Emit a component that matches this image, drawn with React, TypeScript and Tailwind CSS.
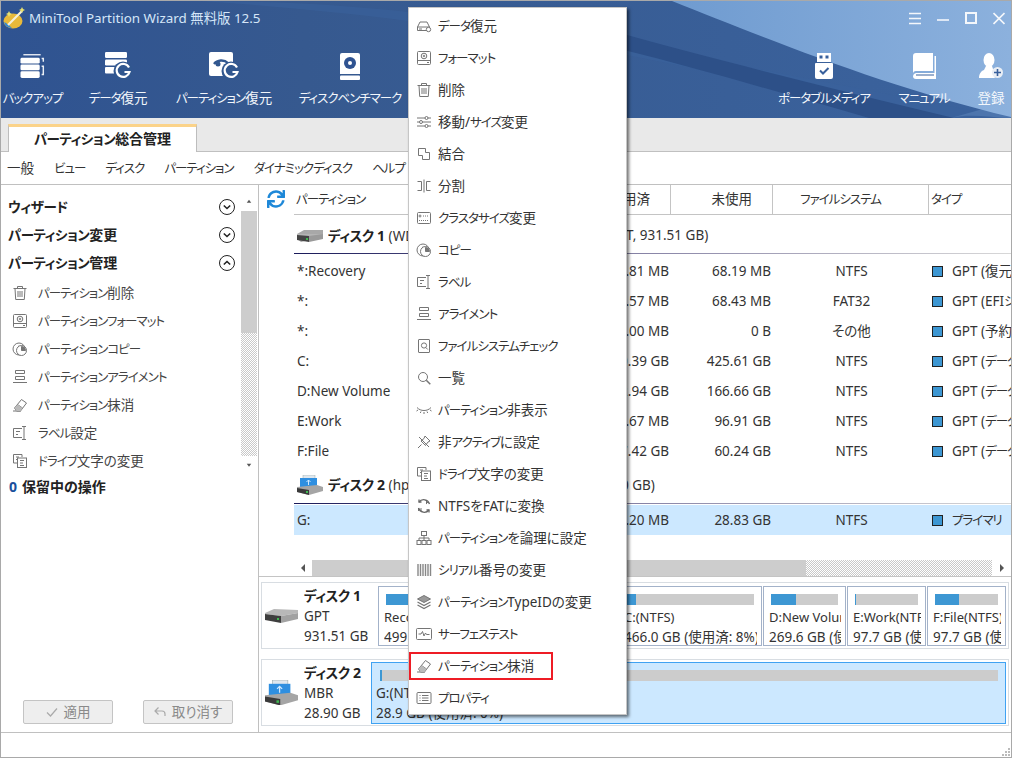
import React from "react";
import { FaSync } from "react-icons/fa";

const G = "#757575";
type P = { children?: React.ReactNode; s?: number; c?: string };
const S = ({ children, s = 16, c = G }: P) => (
  <svg width={s} height={s} viewBox="0 0 16 16" fill="none" stroke={c} strokeWidth="1" className="shrink-0">{children}</svg>
);

const T = ({ t, b }: { t: string; b?: boolean }) => (
  <>
    {t.split(/([\u30A0-\u30FF]+)/).map((p, i) =>
      i % 2 === 1 ? (
        <span key={i} className={b ? "text-[13.5px] tracking-[-0.5px]" : "text-[12.5px] tracking-[-1px]"}>{p}</span>
      ) : (
        <span key={i}>{p}</span>
      )
    )}
  </>
);

const IDrive = () => <S><path d="M1.500 9 4 4h7l2.500 5M1.500 9h12v3.500h-12z" /><circle cx="12.500" cy="11.500" r="2.200" fill="#fff" /><path d="M3 11h3" /></S>;
const IFormat = () => <S><rect x="1.500" y="1.500" width="13" height="13" rx="1" /><path d="M1.500 10.500h13M11 12.500h2" /><circle cx="8" cy="6" r="2.800" /><circle cx="8" cy="6" r=".8" /></S>;
const ITrash = () => <S><path d="M1.500 3.500h13M5.500 3.500v-2h5v2M3 3.500l.7 11h8.600l.7-11M6 6v6M8 6v6M10 6v6" /></S>;
const ISliders = () => <S><path d="M1 4h14M1 8h14M1 12h14" /><circle cx="10.500" cy="4" r="1.500" fill="#fff" /><circle cx="5" cy="8" r="1.500" fill="#fff" /><circle cx="10.500" cy="12" r="1.500" fill="#fff" /></S>;
const IMerge = () => <S><path d="M2.500 2.500h7v4h4v7h-7v-4h-4z" /></S>;
const ISplit = () => <S><path d="M1.500 3.500h4v9h-4M14.500 3.500h-4v9h4M8 1.500v13" /></S>;
const ICluster = () => <S><rect x="1.500" y="2.500" width="13" height="11" rx="1" /><circle cx="4" cy="6" r="1" /><path d="M7 6h6M3 10.500h10" strokeDasharray="1 1" /></S>;
const ICopy = () => <S><circle cx="7" cy="8" r="6" /><path d="M7 4.500V8h3.500" /><circle cx="9.500" cy="9.500" r="5" fill="#fff" /><path d="M9.500 9.500V5.500a4 4 0 0 1 4 4z" fill={G} /></S>;
const ILabel = () => <S><path d="M10 3.500H1.500v9H10M4 6.500h4M4 9.500h2M10 1.500h4M10 14.500h4M12 1.500v13" /></S>;
const IAlign = () => <S><path d="M3.500 1.500h9v3h-9zM3.500 7.500h9v3h-9zM1 13.500h14" /></S>;
const ICheck = () => <S><rect x="2.500" y="1.500" width="11" height="13" rx=".5" /><circle cx="8" cy="7.500" r="2.600" /><path d="m9.800 9.500 2 2" /></S>;
const ISearch = () => <S><circle cx="7" cy="7" r="4.500" /><path d="m10.300 10.300 4 4" strokeWidth="1.500" /></S>;
const IEye = () => <S><path d="M1 5.500c3.500 4 10.500 4 14 0M2 8l-1.500 1M5 9.500l-.7 1.500M8 10v2M11 9.500l.7 1.500M14 8l1.500 1" /></S>;
const IPin = () => <S><path d="m9 2 5 5-2 1-2.500 3.500L5 7l3-2.500zM5.500 10.500 2 14M3 3l10 10" /></S>;
const ILetter = () => <S><path d="M10 4V1.500H1.500V10H5" /><rect x="5.500" y="5" width="9" height="9.500" /><path d="M8 7.500h4M8 10h3M8 12.500h4M4 4h3M4 6.500h1" /></S>;
const IConv = () => <S c="#666"><path d="M13.500 6A6 6 0 0 0 3 4M2.500 10A6 6 0 0 0 13 12" strokeWidth="1.300" /><path d="M3 1.500V4h2.500M13 14.500V12h-2.500" strokeWidth="1.300" /><path d="M10.500 3V6h.1M10.500 4.500h2M2.500 13v-3l2.500 3v-3" strokeWidth=".9" /></S>;
const IOrg = () => <S><rect x="5.500" y="1.500" width="5" height="4" /><rect x="1" y="10.500" width="4" height="4" /><rect x="6" y="10.500" width="4" height="4" /><rect x="11" y="10.500" width="4" height="4" /><path d="M8 5.500v5M3 10.500V8h10v2.500" /></S>;
const IBar = () => <S><path d="M2 2v12M4.500 2v12M7 2v12M9.500 2v12M12 2v12M14.500 2v12" strokeWidth="1.400" stroke="#888" /></S>;
const ILayers = () => <S><path d="m8 1.500 6.500 3.500L8 8.500 1.500 5z" fill="#999" /><path d="m1.500 8 6.500 3.500L14.500 8M1.500 11l6.500 3.500 6.500-3.500" strokeWidth="1.200" /></S>;
const IPulse = () => <S><rect x=".5" y="2.500" width="15" height="11" rx="1" /><path d="M2.500 8H5l1.500-2.500L8 10l1.500-3 1 1.500h3" /></S>;
const IEraser = () => <S><path d="M1 14h8M2.500 11 9.500 2.500l5 3.500-6 8H4.500zM5.500 7.500l5 3.500" /><path d="M5.500 7.500l5 3.500-2 3H4.500L2.500 11z" fill="#bbb" stroke="none" /></S>;
const IProps = () => <S><rect x="1" y="2.500" width="14" height="11" rx="1" /><path d="M3.500 5.500h1M6 5.500h6.500M3.500 8h1M6 8h6.500M3.500 10.500h1M6 10.500h6.500" /></S>;

const menu: [React.FC, string][] = [
  [IDrive, "データ復元"], [IFormat, "フォーマット"], [ITrash, "削除"], [ISliders, "移動/サイズ変更"],
  [IMerge, "結合"], [ISplit, "分割"], [ICluster, "クラスタサイズ変更"], [ICopy, "コピー"],
  [ILabel, "ラベル"], [IAlign, "アライメント"], [ICheck, "ファイルシステムチェック"], [ISearch, "一覧"],
  [IEye, "パーティション非表示"], [IPin, "非アクティブに設定"], [ILetter, "ドライブ文字の変更"], [IConv, "NTFSをFATに変換"],
  [IOrg, "パーティションを論理に設定"], [IBar, "シリアル番号の変更"], [ILayers, "パーティションTypeIDの変更"], [IPulse, "サーフェステスト"],
  [IEraser, "パーティション抹消"], [IProps, "プロパティ"],
];

const side: [React.FC, string][] = [
  [ITrash, "パーティション削除"], [IFormat, "パーティションフォーマット"], [ICopy, "パーティションコピー"],
  [IAlign, "パーティションアライメント"], [IEraser, "パーティション抹消"], [ILabel, "ラベル設定"], [ILetter, "ドライブ文字の変更"],
];

const rows = [
  ["*:Recovery", "499.00 MB", "430.81 MB", "68.19 MB", "NTFS", "GPT (復元パーティション)"],
  ["*:", "100.00 MB", "31.57 MB", "68.43 MB", "FAT32", "GPT (EFIシステム)"],
  ["*:", "16.00 MB", "16.00 MB", "0 B", "その他", "GPT (予約パーティション)"],
  ["C:", "466.00 GB", "40.39 GB", "425.61 GB", "NTFS", "GPT (データ)"],
  ["D:New Volume", "269.60 GB", "102.94 GB", "166.66 GB", "NTFS", "GPT (データ)"],
  ["E:Work", "97.70 GB", "807.67 MB", "96.91 GB", "NTFS", "GPT (データ)"],
  ["F:File", "97.70 GB", "37.42 GB", "60.24 GB", "NTFS", "GPT (データ)"],
];

const tableCols = "grid grid-cols-[166px_120px_91px_102px_156px_1fr]";

const Row = ({ r, sel }: { r: string[]; sel?: boolean }) => (
  <div className={`${tableCols} h-[30px] items-center whitespace-nowrap text-[13.5px] text-[#333] ${sel ? "bg-[#cce8ff]" : ""}`}>
    <div className="pl-[3px]">{r[0]}</div>
    <div className="pr-[20px] text-right">{r[1]}</div>
    <div className="pr-[2px] text-right">{r[2]}</div>
    <div className="pr-[2px] text-right">{r[3]}</div>
    <div className="pl-[1px] text-center">{r[4]}</div>
    <div className="flex items-center overflow-hidden pl-[3px]">
      <span className="mr-[9px] h-[11px] w-[11px] shrink-0 border border-[#222] bg-[#3d97d3]" />
      <span><T t={r[5]} /></span>
    </div>
  </div>
);

const HeadCell = ({ t, cls }: { t: string; cls: string }) => (
  <div className={`flex h-full items-center border-r border-[#c4c4c4] ${cls}`}><span><T t={t} /></span></div>
);

const Chevron = ({ up }: { up?: boolean }) => (
  <svg width="16" height="16" viewBox="0 0 16 16" fill="none" stroke="#222" className="shrink-0">
    <circle cx="8" cy="8" r="7.500" strokeWidth="1" />
    <path d={up ? "m4.800 9.500 3.200-3 3.200 3" : "m4.800 6.500 3.200 3 3.200-3"} strokeWidth="1.600" />
  </svg>
);

const Arrow = ({ d }: { d: "u" | "d" | "l" | "r" }) => {
  const pts = { u: "1,5 4,1 7,5", d: "1,1 4,5 7,1", l: "6,0 6,8 2,4", r: "2,0 2,8 6,4" }[d];
  return <svg width="8" height="8" viewBox="0 0 8 8" fill="#555" className={d === "u" || d === "d" ? "h-[6px]" : ""}><polygon points={pts} /></svg>;
};

const HddSmall = () => (
  <svg width="26" height="12" viewBox="0 0 26 12">
    <polygon points="0,4 7,0 26,0 26,4 25,7 4,12 0,9" fill="#a8a8a8" />
    <polygon points="0,4 25,4 26,7 0,9" fill="#b4b4b4" />
    <polygon points="0,5 12,6 12,12 0,10" fill="#444" />
    <polygon points="12,6 26,4 26,9 12,12" fill="#9a9a9a" />
    <rect x="9" y="8" width="2" height="2" fill="#3fb950" />
  </svg>
);

const UsbSmall = ({ w = 26 }: { w?: number }) => (
  <svg width={w} height={(w * 20) / 26} viewBox="0 0 26 20">
    <rect x="6" y="0" width="12" height="4" fill="#dfe7ee" stroke="#9aa" strokeWidth=".5" />
    <rect x="3" y="3" width="17" height="10" fill="#2f8fe0" />
    <path d="M11.500 5v5M9.500 7l2-2 2 2" stroke="#cfe8ff" fill="none" />
    <polygon points="0,12 20,10 26,12 26,16 12,20 0,17" fill="#a5a5a5" />
    <polygon points="0,13 12,15 12,20 0,17" fill="#3a3a3a" />
    <rect x="9" y="16" width="2" height="2" fill="#3fb950" />
  </svg>
);

const HddBig = () => (
  <svg width="33" height="14" viewBox="0 0 33 14">
    <polygon points="0,4 9,0 33,1 33,4 16,7 0,5" fill="#b8b8b8" />
    <polygon points="0,5 16,7 16,14 0,11" fill="#3e3e3e" />
    <polygon points="16,7 33,4 33,10 16,14" fill="#a2a2a2" />
    <rect x="12" y="9" width="2" height="2" fill="#3fb950" />
  </svg>
);

const Dither = "[background:repeating-conic-gradient(#c9c9c9_0_25%,#ffffff_0_50%)_0_0/2px_2px]";

const Tool = ({ w, t, children }: { w: string; t: string; children: React.ReactNode }) => (
  <div className={`flex shrink-0 flex-col items-center ${w}`}>
    <div className="flex h-[28px] items-center">{children}</div>
    <div className="mt-[9px] whitespace-nowrap text-[13.5px] leading-[18px] text-[#f2f6fb]"><T t={t} /></div>
  </div>
);

const GArrow = ({ cx = 21, cy = 22 }: { cx?: number; cy?: number }) => (
  <g>
    <circle cx={cx} cy={cy} r="9.500" fill="#31578f" />
    <path d={`M${cx + 6} ${cy - 3.5}A6.500 6.500 0 1 0 ${cx + 6.5} ${cy + 1}h-5`} stroke="#fff" strokeWidth="2.200" fill="none" />
  </g>
);

const Box = ({ w, fill, t1, t2 }: { w: string; fill: string; t1: string; t2: string }) => (
  <div className={`h-[60px] shrink-0 overflow-hidden border border-[#a3b2c9] pl-[5px] pr-[4px] pt-[7px] ${w}`}>
    <div className="ml-[2px] mr-[3px] h-[11px] bg-[#cccccc]">
      <div className={`h-full bg-[#3d97d3] ${fill}`} />
    </div>
    <div className="mt-[2px] overflow-hidden whitespace-nowrap text-[13px] leading-[20px] text-[#333]">{t1}</div>
    <div className="overflow-hidden whitespace-nowrap text-[13.5px] leading-[20px] text-[#333]">{t2}</div>
  </div>
);

export default function App() {
  return (
    <div className="relative flex h-[758px] w-[1012px] flex-col overflow-hidden border border-[#a9a9a9] bg-white font-['Noto_Sans','Noto_Sans_CJK_JP',sans-serif] text-[#222] [font-feature-settings:'palt']">
      {/* Header */}
      <div className="relative h-[117px] shrink-0 bg-[linear-gradient(90deg,#2f5391,#36598f_30%,#3b639e)]">
        <svg className="absolute inset-0 h-full w-full" viewBox="0 0 1010 117" preserveAspectRatio="none">
          <defs>
            <linearGradient id="lg" x1="0" x2="1" y1="0" y2="0">
              <stop offset="0" stopColor="#6f9bd0" />
              <stop offset="1" stopColor="#8cb1dd" />
            </linearGradient>
          </defs>
          <path d="M200 0C420 0 560 30 1010 117L900 117C720 70 500 20 200 0Z" fill="#3a629d" opacity=".55" />
          <path d="M619 32C720 60 840 90 953 117H868C780 92 700 68 619 48Z" fill="#2d5088" />
          <path d="M950 117C970 112 990 117 1010 117V100Z" fill="#4d75ad" />
          <path d="M671 0C760 35 880 85 1010 116V0Z" fill="url(#lg)" />
        </svg>
        <div className="relative flex h-[34px] items-center pl-[2px] pr-[6px]">
          <svg width="24" height="24" viewBox="0 0 24 24" className="shrink-0">
            <ellipse cx="10" cy="15" rx="9.500" ry="7.500" fill="#e8b93a" />
            <path d="M1 16a9 7 0 0 0 8 6c-4-4-6-5-8-6z" fill="#2f86d6" />
            <path d="M5 19 19 5" stroke="#f5f0d8" strokeWidth="2.200" />
            <path d="M6 5l1 2 2 1-2 1-1 2-1-2-2-1 2-1zM19 1l1 2 2 1-2 1-1 2-1-2-2-1 2-1z" fill="#e8e070" />
          </svg>
          <span className="ml-[2px] whitespace-nowrap text-[13.4px] text-[#d5e6f8]">MiniTool Partition Wizard 無料版 12.5</span>
          <div className="ml-auto flex items-center gap-[16px]">
            <svg width="12" height="13" viewBox="0 0 12 13" stroke="#f4f7fb" strokeWidth="1.600"><path d="M0 1.500h12M0 6.500h12M0 11.500h12" /></svg>
            <svg width="12" height="13" viewBox="0 0 12 13" stroke="#f4f7fb" strokeWidth="1.600"><path d="M0 8h12" /></svg>
            <svg width="12" height="13" viewBox="0 0 12 13" stroke="#f4f7fb" strokeWidth="2" fill="none"><rect x="1" y="1" width="10" height="10" /></svg>
            <svg width="12" height="13" viewBox="0 0 12 13" stroke="#f4f7fb" strokeWidth="1.700"><path d="m.5 1 11 11M11.500 1l-11 11" /></svg>
          </div>
        </div>
        <div className="relative flex pt-[17px]">
          <Tool w="w-[63px]" t="バックアップ">
            <svg width="25" height="25" viewBox="0 0 25 26" fill="#fff">
              <path d="M3 0h18v1.500H3z" opacity=".85" />
              <rect x="0" y="4" width="20" height="6" rx="1.500" /><rect x="0" y="11" width="20" height="6" rx="1.500" /><rect x="0" y="18" width="20" height="7" rx="1.500" />
              <path d="M22 4h2.500v4H23v-2.500h-1zM22 12h2.500v10H22V20.500h1V13.500h-1z" opacity=".9" />
            </svg>
          </Tool>
          <Tool w="w-[108px]" t="データ復元">
            <svg width="27" height="28" viewBox="0 0 27 28" fill="#fff">
              <rect x="0" y="0" width="22" height="6" rx="1.200" /><rect x="0" y="7.500" width="22" height="6" rx="1.200" /><rect x="0" y="15" width="13" height="6.500" rx="1" />
              <GArrow cx={18} cy={19} />
            </svg>
          </Tool>
          <Tool w="w-[104px]" t="パーティション復元">
            <svg width="31" height="28" viewBox="0 0 31 28" fill="#fff">
              <rect x="0" y="0" width="24" height="24" rx="2" />
              <path d="M5 12A9 8 0 0 1 19 11" stroke="#31578f" strokeWidth="2.400" fill="none" />
              <circle cx="9" cy="12" r="2.500" fill="#31578f" />
              <GArrow cx={22} cy={19} />
            </svg>
          </Tool>
          <Tool w="w-[148px]" t="ディスクベンチマーク">
            <svg width="20" height="27" viewBox="0 0 20 27" fill="#fff">
              <path d="M2 0h16a2 2 0 0 1 2 2v19H0V2a2 2 0 0 1 2-2z" />
              <rect x="0" y="22.500" width="20" height="4.500" rx="1" />
              <circle cx="10" cy="10" r="6" fill="#2f5391" /><circle cx="10" cy="10" r="2" fill="#fff" />
            </svg>
          </Tool>
          <div className="ml-auto flex">
            <Tool w="w-[106px]" t="ポータブルメディア">
              <svg width="18" height="26" viewBox="0 0 18 26" fill="#fff">
                <path d="M2 0h14v9H2z" /><rect x="4.500" y="2.500" width="3" height="3" fill="#38609c" /><rect x="10.500" y="2.500" width="3" height="3" fill="#38609c" />
                <path d="M1 10h16a1 1 0 0 1 1 1v13a2 2 0 0 1-2 2H2a2 2 0 0 1-2-2V11a1 1 0 0 1 1-1z" />
                <path d="m5 17.500 3 3 5.500-5.500" stroke="#38609c" strokeWidth="2" fill="none" />
              </svg>
            </Tool>
            <Tool w="w-[94px]" t="マニュアル">
              <svg width="23" height="26" viewBox="0 0 23 26" fill="#fff">
                <path d="M3 0h17v18H3a3 3 0 0 0-3 3V3a3 3 0 0 1 3-3z" />
                <path d="M21.500 3H23v23H3a3 3 0 0 1-3-3 3.500 3.500 0 0 1 3-3h18.500z" />
                <path d="M3 22h18" stroke="#38609c" strokeWidth="1" />
              </svg>
            </Tool>
            <Tool w="w-[40px]" t="登録">
              <svg width="25" height="26" viewBox="0 0 25 26" fill="#fff">
                <ellipse cx="10" cy="7" rx="5.500" ry="7" />
                <path d="M7 13h6l1 3 3 1a7 7 0 0 0-1 8H0c0-4 2-7 5-8z" />
                <circle cx="18.500" cy="19.500" r="5.500" fill="#e9eef5" />
                <path d="M18.500 16v7M15 19.500h7" stroke="#38609c" strokeWidth="1.600" />
              </svg>
            </Tool>
          </div>
        </div>
      </div>

      {/* Tabs */}
      <div className="flex h-[34px] shrink-0 items-end border-b border-[#c0c0c0] bg-[#e9e9e9] pl-[7px]">
        <div className="-mb-px flex h-[28px] w-[189px] items-center justify-center border-x border-[#bdbdbd] border-t-[3px] border-t-[#fbd38a] bg-white pb-[1px] text-[14px] font-bold text-[#222]">
          <span><T b t="パーティション総合管理" /></span>
        </div>
      </div>

      {/* Menu bar */}
      <div className="flex h-[33px] shrink-0 items-center gap-[20px] border-b border-[#c0c0c0] pl-[6px] pt-[1px] text-[13.5px] text-[#333]">
        {["一般", "ビュー", "ディスク", "パーティション", "ダイナミックディスク", "ヘルプ"].map((m) => (
          <span key={m}><T t={m} /></span>
        ))}
      </div>

      {/* Main */}
      <div className="flex min-h-0 flex-1">
        {/* Sidebar */}
        <div className="flex w-[258px] shrink-0 flex-col border-r border-[#c0c0c0]">
          <div className="mt-[7px] flex h-[283px] shrink-0">
            <div className="min-w-0 flex-1 pt-px">
              {[["ウィザード", false], ["パーティション変更", false], ["パーティション管理", true]].map(([t, up]) => (
                <div key={t as string} className="flex h-[28px] items-center justify-between pl-[7px] pr-[6px] text-[14px] font-bold">
                  <span className="-mt-px"><T b t={t as string} /></span>
                  <Chevron up={up as boolean} />
                </div>
              ))}
              <div className="h-[2px]" />
              {side.map(([I, t]) => (
                <div key={t} className="flex h-[28px] items-center gap-[10px] pl-[11px] text-[13.5px] text-[#444]">
                  <I />
                  <span className="whitespace-nowrap"><T t={t} /></span>
                </div>
              ))}
            </div>
            <div className="mr-px flex w-[16px] shrink-0 flex-col">
              <div className="flex h-[19px] items-center justify-center"><Arrow d="u" /></div>
              <div className="h-[122px] bg-[#cdcdcd]" />
              <div className={`flex-1 ${Dither}`} />
              <div className="flex h-[19px] items-center justify-center"><Arrow d="d" /></div>
            </div>
          </div>
          <div className="flex h-[22px] items-center pl-[8px] text-[14px] font-bold">
            <span className="text-[#1a4f9c]">0</span>
            <span className="ml-[5px]">保留中の操作</span>
          </div>
          <div className="mt-auto flex gap-[30px] pb-[8px] pl-[22px]">
            <div className="flex h-[24px] w-[90px] items-center justify-center gap-[6px] rounded-[2px] border border-[#c4c4c4] bg-[#eeeeee] text-[13.5px] text-[#8a8a8a]">
              <svg width="12" height="12" viewBox="0 0 12 12" fill="none" stroke="#aaa" strokeWidth="1.200"><path d="m1 6.500 3.500 3.500L11 2.500" /></svg>
              適用
            </div>
            <div className="flex h-[24px] w-[90px] items-center justify-center gap-[6px] rounded-[2px] border border-[#c4c4c4] bg-[#eeeeee] text-[13.5px] text-[#8a8a8a]">
              <svg width="12" height="12" viewBox="0 0 12 12" fill="none" stroke="#aaa" strokeWidth="1.200"><path d="M4.500 1.500 1 5l3.500 3.500M1 5h7a3 3 0 0 1 3 3v2" /></svg>
              取り消す
            </div>
          </div>
        </div>

        {/* Right pane */}
        <div className="flex min-w-0 flex-1 flex-col">
          <div className="flex h-[392px] shrink-0 flex-col border-b border-[#c4c4c4]">
            <div className="flex h-[30px] shrink-0">
              <div className="flex w-[35px] shrink-0 items-center pb-[2px] pl-[8px] text-[#1e88d8]">
                <FaSync size={18} />
              </div>
              <div className={`${tableCols} min-w-0 flex-1 items-center border-b border-[#c4c4c4] text-[13.5px] text-[#333]`}>
                <div className="pl-[2px]"><T t="パーティション" /></div>
                <div className="pr-[20px] text-right">容量</div>
                <HeadCell t="使用済" cls="justify-end pr-[20px]" />
                <HeadCell t="未使用" cls="justify-end pr-[20px]" />
                <HeadCell t="ファイルシステム" cls="justify-center pr-[20px]" />
                <div className="pl-[2px]"><T t="タイプ" /></div>
              </div>
            </div>
            <div className="min-h-0 flex-1 pl-[35px]">
              <div className="flex h-[38px] items-center whitespace-nowrap pl-[3px] pt-[3px] text-[13.5px] text-[#333]">
                <HddSmall />
                <span className="ml-[5px] inline-block w-[298px] overflow-hidden">
                  <b className="text-[14px] text-[#222]"><T b t="ディスク 1" /></b> (WDC WD10SPZX-08Z10 SATA, GPT, 931.51 GB)
                </span>
                <span>T, 931.51 GB)</span>
              </div>
              <div className="h-px bg-[linear-gradient(90deg,#1a1a5a,#8a86a8_50%,#d8d8d8)]" />
              <div className="mt-[2px]">
                {rows.map((r, i) => <Row key={i} r={r} />)}
              </div>
              <div className="flex h-[37px] items-center whitespace-nowrap pl-[3px] pt-[1px] text-[13.5px] text-[#333]">
                <UsbSmall />
                <span className="ml-[5px] inline-block w-[293px] overflow-hidden">
                  <b className="text-[14px] text-[#222]"><T b t="ディスク 2" /></b> (hp v215b USB, MBR, 28.90 GB)
                </span>
                <span>0 GB)</span>
              </div>
              <div className="h-px bg-[linear-gradient(90deg,#1a1a5a,#8a86a8_50%,#d8d8d8)]" />
              <div className="mt-px">
                <Row sel r={["G:", "28.90 GB", "71.20 MB", "28.83 GB", "NTFS", "プライマリ"]} />
              </div>
            </div>
            <div className="ml-[35px] flex h-[16px] shrink-0">
              <div className="flex w-[18px] items-center justify-center"><Arrow d="l" /></div>
              <div className="w-[494px] bg-[#cdcdcd]" />
              <div className={`flex-1 ${Dither}`} />
              <div className="flex w-[19px] items-center justify-center"><Arrow d="r" /></div>
            </div>
          </div>

          {/* Disk map */}
          <div className="flex flex-1 flex-col gap-[10px] pl-[2px] pr-[2px] pt-[5px]">
            <div className="flex h-[67px] items-center border border-[#d8dde2]">
              <div className="flex w-[116px] shrink-0 items-center pl-[3px]">
                <HddBig />
                <div className="ml-[6px] text-[13.5px] leading-[20px] text-[#333]">
                  <div className="text-[14px] font-bold text-[#222]"><T b t="ディスク 1" /></div>
                  <div>GPT</div>
                  <div className="whitespace-nowrap">931.51 GB</div>
                </div>
              </div>
              <div className="flex gap-[1px]">
                <Box w="w-[79px]" fill="w-[86%]" t1="Recovery(NTFS)" t2="499 MB (使用済)" />
                <Box w="w-[79px]" fill="w-[30%]" t1="(FAT32)" t2="100 MB" />
                <Box w="w-[79px]" fill="w-full" t1="(その他)" t2="16 MB" />
                <Box w="w-[144px]" fill="w-[8%]" t1="C:(NTFS)" t2="466.0 GB (使用済: 8%)" />
                <Box w="w-[83px]" fill="w-[38%]" t1="D:New Volume" t2="269.6 GB (使用済)" />
                <Box w="w-[79px]" fill="w-[1%]" t1="E:Work(NTFS)" t2="97.7 GB (使用済)" />
                <Box w="w-[79px]" fill="w-[38%]" t1="F:File(NTFS)" t2="97.7 GB (使用済)" />
              </div>
            </div>
            <div className="flex h-[67px] items-center border border-[#d8dde2]">
              <div className="flex w-[109px] shrink-0 items-center pl-[3px]">
                <UsbSmall w={33} />
                <div className="ml-[6px] text-[13.5px] leading-[20px] text-[#333]">
                  <div className="text-[14px] font-bold text-[#222]"><T b t="ディスク 2" /></div>
                  <div>MBR</div>
                  <div className="whitespace-nowrap">28.90 GB</div>
                </div>
              </div>
              <div className="h-[62px] w-[635px] shrink-0 border border-[#3fa2f2] bg-[#cce8ff] pl-[4px] pr-[7px] pt-[7px]">
                <div className="ml-[4px] h-[11px] bg-[#cccccc]">
                  <div className="h-full w-[2px] bg-[#3d97d3]" />
                </div>
                <div className="mt-[2px] whitespace-nowrap text-[13.5px] leading-[20px] text-[#333]">G:(NTFS)</div>
                <div className="whitespace-nowrap text-[13.5px] leading-[20px] text-[#333]">28.9 GB (使用済: 0%)</div>
              </div>
            </div>
          </div>
        </div>
      </div>

      {/* Status bar */}
      <div className="relative h-[25px] shrink-0 border-t border-[#c0c0c0]">
        <svg className="absolute bottom-px right-px" width="10" height="10" viewBox="0 0 10 10" fill="#bbb">
          <rect x="8" y="2" width="2" height="2" /><rect x="5" y="5" width="2" height="2" /><rect x="8" y="5" width="2" height="2" /><rect x="2" y="8" width="2" height="2" /><rect x="5" y="8" width="2" height="2" /><rect x="8" y="8" width="2" height="2" />
        </svg>
      </div>

      {/* Context menu */}
      <div className="absolute left-[407px] top-[6px] w-[219px] border border-[#c6c6c6] bg-white pt-[2px] shadow-[2px_2px_3px_rgba(0,0,0,0.55)]">
        {menu.map(([I, t]) => (
          <div key={t} className="relative flex h-[32px] items-center gap-[6px] pl-[7px] text-[13.5px] text-[#333]">
            <I />
            <span className="whitespace-nowrap"><T t={t} /></span>
            {t === "パーティション抹消" && (
              <span className="absolute left-0 top-[2px] h-[28px] w-[144px] border-2 border-[#ee1c25]" />
            )}
          </div>
        ))}
      </div>
    </div>
  );
}
